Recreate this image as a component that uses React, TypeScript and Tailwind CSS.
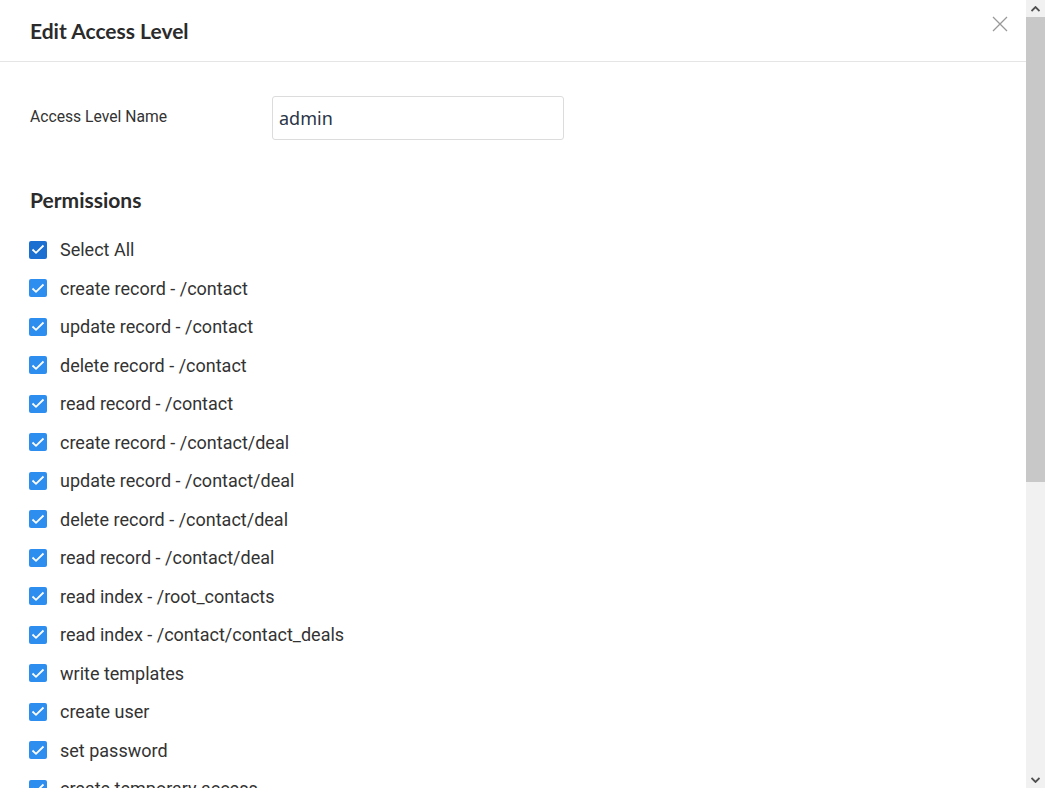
import React from 'react';

const permissions = [
  'create record - /contact',
  'update record - /contact',
  'delete record - /contact',
  'read record - /contact',
  'create record - /contact/deal',
  'update record - /contact/deal',
  'delete record - /contact/deal',
  'read record - /contact/deal',
  'read index - /root_contacts',
  'read index - /contact/contact_deals',
  'write templates',
  'create user',
  'set password',
  'create temporary access',
  'delete user',
  'read user',
  'update access levels',
  'read access levels',
  'export records',
  'import records',
  'manage webhooks',
];

const Check: React.FC<{ dark?: boolean }> = ({ dark }) => (
  <span
    className={`w-[18px] h-[18px] -ml-px rounded-[2px] flex items-center justify-center shrink-0 ${
      dark ? 'bg-[#1a6fd1]' : 'bg-[#2d8ef0]'
    }`}
  >
    <svg width="14" height="11" viewBox="0 0 14 11" fill="none">
      <path d="M1.5 5.5L5 8.8L12.5 1.5" stroke="white" strokeWidth="1.8" />
    </svg>
  </span>
);

const App: React.FC = () => {
  return (
    <div className="h-screen flex bg-white text-[#333] font-['Roboto',sans-serif]">
      <div className="flex-1 overflow-hidden">
        {/* Header */}
        <div className="relative h-[62px] border-b border-[#e5e5e5] flex items-center px-[30px]">
          <h1 className="font-['Lato',sans-serif] font-bold text-[21px] text-[#2b2b2b]">Edit Access Level</h1>
          <button className="absolute right-[18px] top-[16px] w-[16px] h-[16px]">
            <svg width="16" height="16" viewBox="0 0 16 16" fill="none">
              <path d="M1 1L15 15M15 1L1 15" stroke="#999" strokeWidth="1.3" />
            </svg>
          </button>
        </div>

        <div className="px-[30px] pt-[34px] pb-10">
          {/* Name field */}
          <div className="flex items-center">
            <label className="w-[242px] text-[15.7px] text-[#333] -mt-[3px]">Access Level Name</label>
            <input
              readOnly
              value="admin"
              className="w-[292px] h-[44px] border border-[#dcdcdc] rounded-[3px] px-[6px] text-[18px] text-[#2a3547] outline-none font-['Noto_Sans',sans-serif]"
            />
          </div>

          <h2 className="font-['Lato',sans-serif] font-bold text-[21px] text-[#2b2b2b] mt-[44px]">Permissions</h2>

          <div className="mt-[15px]">
            <div className="flex items-center gap-[13px] h-[38.5px] text-[18px] text-[#333]">
              <Check dark />
              <span>Select All</span>
            </div>
            {permissions.map((p) => (
              <div key={p} className="flex items-center gap-[13px] h-[38.5px] text-[18px] text-[#333]">
                <Check />
                <span>{p}</span>
              </div>
            ))}
          </div>
        </div>
      </div>

      {/* Scrollbar */}
      <div className="w-[19px] bg-[#f1f1f1] flex flex-col shrink-0">
        <div className="h-[17px] flex items-center justify-center">
          <svg width="9" height="6" viewBox="0 0 9 6"><path d="M0.5 5L4.5 1L8.5 5" stroke="#505050" strokeWidth="1.8" fill="none" /></svg>
        </div>
        <div className="h-[465px] bg-[#c8c8c8]" />
        <div className="flex-1" />
        <div className="h-[17px] flex items-center justify-center">
          <svg width="9" height="6" viewBox="0 0 9 6"><path d="M0.5 1L4.5 5L8.5 1" stroke="#505050" strokeWidth="1.8" fill="none" /></svg>
        </div>
      </div>
    </div>
  );
};

export default App;
